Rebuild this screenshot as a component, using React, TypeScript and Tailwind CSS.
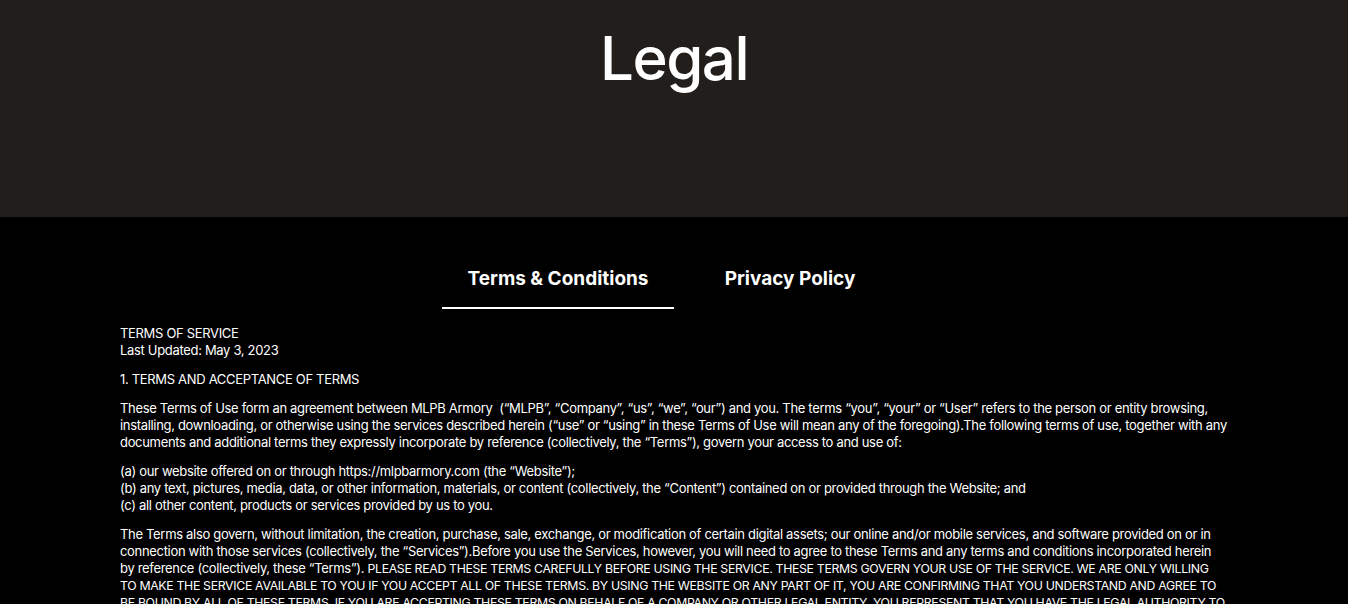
import React, { useState } from 'react';

const tabs = ['Terms & Conditions', 'Privacy Policy'];

export default function App() {
    const [active, setActive] = useState(0);

    return (
        <div className="min-h-screen bg-black text-white font-['Inter','Liberation_Sans',sans-serif]">
            <header className="h-[217px] bg-[#211e1b] flex justify-center pt-[20px]">
                <h1 className="text-[60px] leading-[76px] font-medium tracking-[-1.5px]">Legal</h1>
            </header>

            <div className="flex justify-center pt-[45px]">
                {tabs.map((tab, i) => (
                    <button
                        key={tab}
                        onClick={() => setActive(i)}
                        className={`w-[232px] h-[47px] text-[19px] font-bold flex items-start justify-center pt-[3px] border-b-2 ${active === i ? 'border-white' : 'border-transparent'}`}
                    >
                        {tab}
                    </button>
                ))}
            </div>

            <div className="max-w-[1140px] mx-auto px-4 pt-[16px] text-[13px] leading-[17px] tracking-[-0.32px]">
                <p>TERMS OF SERVICE<br />Last Updated: May 3, 2023</p>
                <p className="mt-3">1. TERMS AND ACCEPTANCE OF TERMS</p>
                <p className="mt-3">
                    These Terms of Use form an agreement between MLPB Armory&nbsp; (“MLPB”, “Company”, “us”, “we”, “our”) and you. The terms “you”, “your” or “User” refers to the person or entity browsing, installing, downloading, or otherwise using the services described herein (“use” or “using” in these Terms of Use will mean any of the foregoing).The following terms of use, together with any documents and additional terms they expressly incorporate by reference (collectively, the “Terms”), govern your access to and use of:
                </p>
                <p className="mt-3">
                    (a) our website offered on or through https://mlpbarmory.com (the “Website”);<br />
                    (b) any text, pictures, media, data, or other information, materials, or content (collectively, the “Content”) contained on or provided through the Website; and<br />
                    (c) all other content, products or services provided by us to you.
                </p>
                <p className="mt-3">
                    The Terms also govern, without limitation, the creation, purchase, sale, exchange, or modification of certain digital assets; our online and/or mobile services, and software provided on or in connection with those services (collectively, the “Services”).Before you use the Services, however, you will need to agree to these Terms and any terms and conditions incorporated herein by reference (collectively, these “Terms”).{' '}
                    <span className="text-[12.3px] tracking-[-0.33px]">
                        PLEASE READ THESE TERMS CAREFULLY BEFORE USING THE SERVICE. THESE TERMS GOVERN YOUR USE OF THE SERVICE. WE ARE ONLY WILLING TO MAKE THE SERVICE AVAILABLE TO YOU IF YOU ACCEPT ALL OF THESE TERMS. BY USING THE WEBSITE OR ANY PART OF IT, YOU ARE CONFIRMING THAT YOU UNDERSTAND AND AGREE TO BE BOUND BY ALL OF THESE TERMS. IF YOU ARE ACCEPTING THESE TERMS ON BEHALF OF A COMPANY OR OTHER LEGAL ENTITY, YOU REPRESENT THAT YOU HAVE THE LEGAL AUTHORITY TO BIND SUCH ENTITY TO THESE TERMS, IN WHICH CASE THE TERM “YOU” SHALL REFER TO SUCH ENTITY.
                    </span>
                </p>
            </div>
        </div>
    );
}
